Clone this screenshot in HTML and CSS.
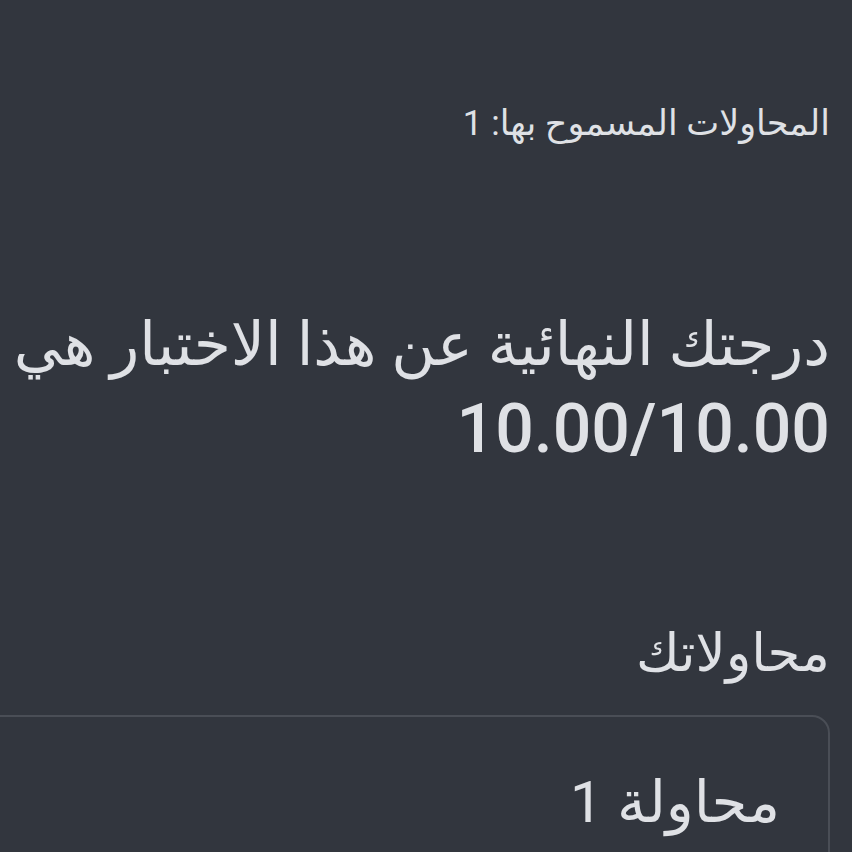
FILE: index.html
```html
<!DOCTYPE html>
<html lang="ar" dir="rtl">
<head>
    <meta charset="UTF-8">
    <meta name="viewport" content="width=device-width, initial-scale=1.0">
    <title>نتيجة الاختبار</title>
    <link rel="stylesheet" href="styles.css">
</head>
<body>
    <main class="quiz-summary">
        <p class="attempts-allowed">المحاولات المسموح بها: 1</p>

        <h3 class="final-grade"><span class="grade-label">درجتك النهائية عن هذا الاختبار هي</span> <span class="grade-value">10.00/10.00</span></h3>

        <h3 class="attempts-title">محاولاتك</h3>

        <section class="attempt-card">
            <h4 class="attempt-name">محاولة 1</h4>
        </section>
    </main>
</body>
</html>
```

FILE: styles.css
```css
* {
    margin: 0;
    padding: 0;
    box-sizing: border-box;
}
html, body {
    height: 100%;
    overflow: hidden;
}
body {
    background-color: #32363e;
    color: #dfe1e5;
    font-family: Roboto, "DejaVu Sans", sans-serif;
}
.quiz-summary {
    padding: 104px 22px 0 0;
}
.attempts-allowed {
    font-size: 35px;
    line-height: 40px;
}
.final-grade {
    margin-top: 156px;
    font-size: 68px;
    font-weight: 500;
    line-height: 84px;
}
.grade-label {
    font-size: 60px;
    font-weight: normal;
    white-space: nowrap;
}
.grade-value {
    display: block;
    white-space: nowrap;
}
.attempts-title {
    margin-top: 152px;
    font-size: 53px;
    font-weight: normal;
    line-height: 60px;
}
.attempt-card {
    margin: 32px 0 0 -40px;
    height: 200px;
    border: 2px solid #4a4e56;
    border-radius: 18px;
    padding: 50px 48px 0 0;
}
.attempt-name {
    font-size: 58px;
    font-weight: normal;
    line-height: 70px;
}
```
